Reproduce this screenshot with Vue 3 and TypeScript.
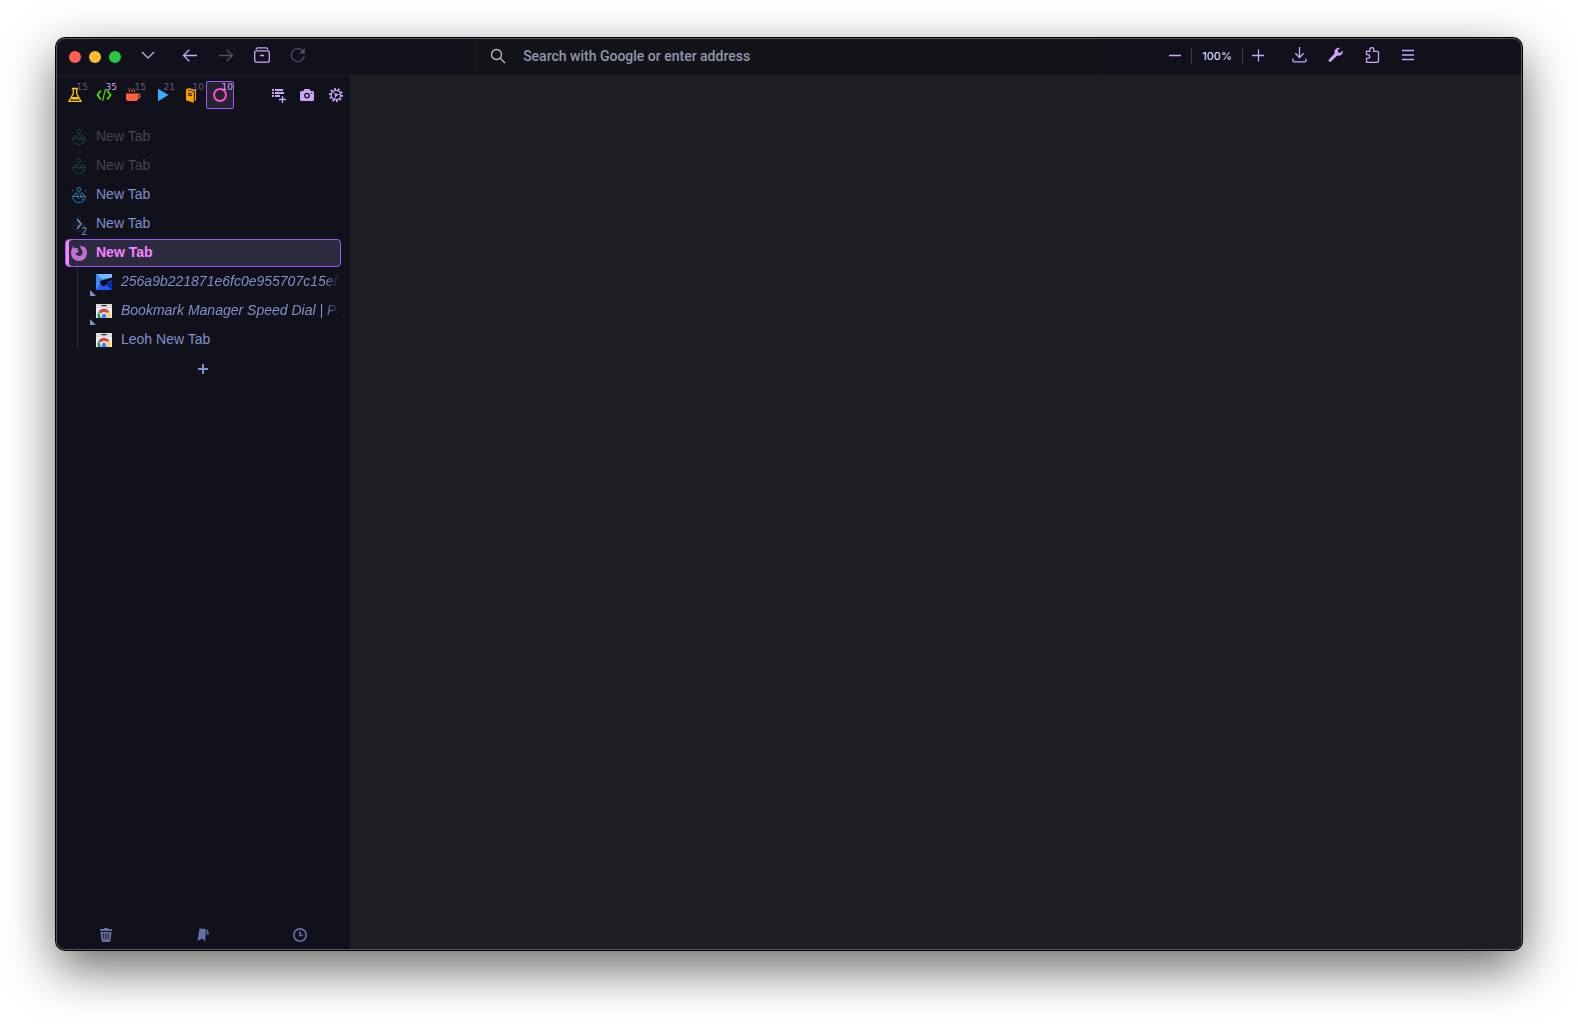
<script setup lang="ts">
import { ref } from 'vue'

interface Panel {
  id: string
  label: string
  count: number
}

interface Tab {
  id: number
  title: string
  icon: 'trio' | 'folded' | 'firefox' | 'blue' | 'store'
  state?: 'unloaded' | 'active'
  child?: boolean
  unread?: boolean
}

const panels: Panel[] = [
  { id: 'lab', label: 'Lab', count: 15 },
  { id: 'code', label: 'Code', count: 35 },
  { id: 'coffee', label: 'Coffee', count: 15 },
  { id: 'media', label: 'Media', count: 21 },
  { id: 'books', label: 'Books', count: 10 },
  { id: 'misc', label: 'Misc', count: 10 },
]

const activePanel = ref('misc')

const tabs: Tab[] = [
  { id: 1, title: 'New Tab', icon: 'trio', state: 'unloaded' },
  { id: 2, title: 'New Tab', icon: 'trio', state: 'unloaded' },
  { id: 3, title: 'New Tab', icon: 'trio' },
  { id: 4, title: 'New Tab', icon: 'folded' },
  { id: 5, title: 'New Tab', icon: 'firefox', state: 'active' },
  { id: 6, title: '256a9b221871e6fc0e955707c15ef', icon: 'blue', child: true, unread: true },
  { id: 7, title: 'Bookmark Manager Speed Dial | Pa', icon: 'store', child: true, unread: true },
  { id: 8, title: 'Leoh New Tab', icon: 'store', child: true },
]
</script>

<template>
  <div class="desktop">
    <div class="window">
      <header class="toolbar">
        <div class="lights">
          <button class="light close" aria-label="Close"></button>
          <button class="light minimize" aria-label="Minimize"></button>
          <button class="light maximize" aria-label="Zoom window"></button>
        </div>
        <button class="tool" aria-label="List tabs">
          <svg width="16" height="16" viewBox="0 0 16 16"><path d="M2 5l6 6 6-6" /></svg>
        </button>
        <nav class="history">
          <button class="tool" aria-label="Back">
            <svg width="16" height="16" viewBox="0 0 16 16"><path d="M15 8.500H1.500M7.300 2.700L1.500 8.500l5.800 5.800" /></svg>
          </button>
          <button class="tool dim" aria-label="Forward">
            <svg width="16" height="16" viewBox="0 0 16 16"><path d="M1 8.500h13.500M8.700 2.700L14.500 8.500l-5.800 5.800" /></svg>
          </button>
          <button class="tool" aria-label="Archive">
            <svg width="16" height="16" viewBox="0 0 16 16"><path d="M3 .8h10M2.300 3.800h11.400a1.600 1.600 0 0 1 1.600 1.600v8a1.800 1.800 0 0 1-1.800 1.800h-11a1.800 1.800 0 0 1-1.800-1.800v-8a1.600 1.600 0 0 1 1.600-1.600zM2 2.300L3 .8M14 2.300L13 .8M6 8.500h4" /></svg>
          </button>
          <button class="tool dim" aria-label="Reload">
            <svg width="16" height="16" viewBox="0 0 16 16"><path d="M14.300 9.200A6.500 6.500 0 1 1 12.400 3.500" /><path class="solid" d="M14.800.8v5.700H9z" /></svg>
          </button>
        </nav>
        <div class="spacer"></div>
        <label class="urlbar">
          <svg width="16" height="16" viewBox="0 0 16 16"><circle cx="6.500" cy="6.500" r="5" /><path d="M10.200 10.200L15 15" /></svg>
          <input type="text" placeholder="Search with Google or enter address" aria-label="Address" />
        </label>
        <div class="gap"></div>
        <div class="zoom">
          <button class="tool" aria-label="Zoom out">
            <svg width="16" height="16" viewBox="0 0 16 16"><path d="M2 8.500h12" /></svg>
          </button>
          <button class="level">100%</button>
          <button class="tool plus" aria-label="Zoom in">
            <svg width="16" height="16" viewBox="0 0 16 16"><path d="M2 8.500h12M8.500 2.500v12" /></svg>
          </button>
        </div>
        <div class="actions">
          <button class="tool" aria-label="Downloads">
            <svg width="16" height="16" viewBox="0 0 16 16"><path d="M7.500 0v10.500M3.300 6.300l4.200 4.200 4.200-4.200M1 11.500v2a1.300 1.300 0 0 0 1.300 1.300h10.400a1.300 1.300 0 0 0 1.300-1.300v-2" /></svg>
          </button>
          <button class="tool" aria-label="Developer tools">
            <svg width="16" height="16" viewBox="0 0 16 16"><path class="solid" d="M14.700 3.600l-2.600 2.300-2-.6-.4-2L12 .9C10.300.5 8.400 1 7.300 2.500c-.9 1.200-1 2.500-.6 3.700L1 12.600c-.7.7-.6 1.500 0 2s1.400.5 2 0l6.300-6c1.500.5 3.100.2 4.300-1 1.100-1.100 1.500-2.600 1.100-4z" /></svg>
          </button>
          <button class="tool" aria-label="Extensions">
            <svg width="16" height="16" viewBox="0 0 16 16"><path d="M2.500 15.300V11.300h1.300c2.600 0 2.600-3.600 0-3.600H2.500V4.400h3.300V2.600a2 2 0 0 1 4 0v1.800h3.700a1 1 0 0 1 1 1V14.300a1 1 0 0 1-1 1z" /></svg>
          </button>
          <button class="tool" aria-label="Menu">
            <svg width="16" height="16" viewBox="0 0 16 16"><path d="M2 3.500h12M2 8h12M2 12.500h12" /></svg>
          </button>
        </div>
      </header>

      <div class="body">
        <aside class="sidebar">
          <div class="panels">
            <button
              v-for="panel in panels"
              :key="panel.id"
              class="panel"
              :class="[panel.id, { current: panel.id === activePanel }]"
              :aria-label="panel.label"
              @click="activePanel = panel.id"
            >
              <svg v-if="panel.id === 'lab'" width="16" height="16" viewBox="0 0 16 16">
                <path class="line" d="M5 1.500h6M6.300 1.500v5L2 14.300h12L9.700 6.500v-5" />
                <path class="solid" d="M4.800 10h6.400l.8 2.500H4z" />
              </svg>
              <svg v-else-if="panel.id === 'code'" width="16" height="16" viewBox="0 0 16 16">
                <path class="line thick" d="M4.800 3.500L1.500 8l3.300 4.500M11.200 3.500L14.500 8l-3.300 4.500" />
                <path class="line" d="M9.500 2l-3 12" />
              </svg>
              <svg v-else-if="panel.id === 'coffee'" width="16" height="16" viewBox="0 0 16 16">
                <path class="solid" d="M1 6.500h12v5.300a2.200 2.200 0 0 1-2.200 2.200H3.200A2.200 2.200 0 0 1 1 11.800z" />
                <path class="line" d="M12.500 7.200h1a1.300 1.300 0 0 1 1.300 1.300v.6a2 2 0 0 1-2 2h-.3" />
                <path class="line steam" d="M4.700 5V3.600l-1-1V1.500M7.200 5V3.600l-1-1V1.500M9.700 5V3.600l-1-1V1.500" />
              </svg>
              <svg v-else-if="panel.id === 'media'" width="16" height="16" viewBox="0 0 16 16">
                <path class="solid" d="M4 1.800L14.500 8 4 14.200z" />
              </svg>
              <svg v-else-if="panel.id === 'books'" width="16" height="16" viewBox="0 0 16 16">
                <path class="solid" d="M3 2.300L5.500 1 13 3v10.500l-1.200.7V4.500L5 2.600l-.8.4 6.600 2v10.700L3 13.200z" />
                <path class="cut" d="M5 6l4 1.100M5 7.800L9 8.900" />
              </svg>
              <svg v-else width="16" height="16" viewBox="0 0 16 16">
                <circle class="line ring" cx="8" cy="8" r="6" />
              </svg>
              <span class="count">{{ panel.count }}</span>
            </button>

            <div class="panel-tools">
              <button class="panel" aria-label="New panel">
                <svg width="16" height="16" viewBox="0 0 16 16">
                  <path class="solid" d="M2 2h2v2H2zM5 2h8v2H5zM2 5h2v2H2zM5 5h9v2H5zM2 8h2v2H2zM5 8h5v2H5z" />
                  <path class="line" d="M9 12.500h7M12.500 9v7" />
                </svg>
              </button>
              <button class="panel" aria-label="Snapshot">
                <svg width="16" height="16" viewBox="0 0 16 16">
                  <path class="solid" fill-rule="evenodd" d="M5.500 2h5l1 2h2A1.500 1.500 0 0 1 15 5.500v7a1.500 1.500 0 0 1-1.500 1.500h-11A1.500 1.500 0 0 1 1 12.500v-7A1.500 1.500 0 0 1 2.500 4h2zM8 5.700a2.900 2.900 0 1 0 0 5.800 2.900 2.900 0 0 0 0-5.800zM12 5.800v1h1.200v-1z" />
                  <circle class="solid" cx="8" cy="8.600" r="1.600" />
                </svg>
              </button>
              <button class="panel" aria-label="Settings">
                <svg width="16" height="16" viewBox="0 0 16 16">
                  <circle class="line" cx="8" cy="8" r="4.700" />
                  <circle class="line teeth" cx="8" cy="8" r="6" pathLength="20" />
                  <circle class="solid" cx="8" cy="8" r="1.400" />
                  <path class="line spokes" d="M8 8l4.600-.8M8 8l-1.600 4.500M8 8L5 4.500" />
                </svg>
              </button>
            </div>
          </div>

          <ul class="tabs">
            <li v-for="tab in tabs" :key="tab.id" class="row" :class="{ child: tab.child }">
              <button class="tab" :class="[tab.state, { unread: tab.unread }]">
                <span class="favicon">
                  <svg v-if="tab.icon === 'trio' || tab.icon === 'folded'" class="trio" :class="{ faded: tab.icon === 'folded' }" width="16" height="16" viewBox="0 0 16 16">
                    <circle cx="8" cy="2.500" r="1.900" />
                    <path d="M4.800 5.800L7.300 9.500H2zM11.200 5.800L14 9.500H8.700zM1.300 9.500H2C1 12.500 4 15.400 8 15.400s7-2.900 6-5.900h.7M6 9.500L8.500 12M10 9.500l2.500 4M7 5.500L8 6.500l1-1M.8 3l1.400 1.200M15.200 3l-1.400 1.200" />
                  </svg>
                  <svg v-else-if="tab.icon === 'firefox'" width="16" height="16" viewBox="0 0 16 16">
                    <path fill="#c070cf" d="M2.800 1C1 2.800 0 5.300 0 8a8 8 0 0 0 16 0c0-2.900-1.400-5.500-3.600-7L12 2.200 9.800 0C9 1.500 9.300 3 10.300 4.200c1.300 1.500 1.700 3 1 4.600-.6 1.300-1.800 2.100-3.300 2.100-2 0-3.500-1.400-3.400-3.100.9.400 1.800.2 2.300-.4.500-.4 1.300-.6 1.200-1.200-.2-.6-1.600-.5-1.700-1.200-.1-.5.500-.8.600-1.600C5.800 3 4.600 3 3.800 3.600 3.200 3 2.800 2.200 2.800 1z" />
                  </svg>
                  <svg v-else-if="tab.icon === 'blue'" width="16" height="16" viewBox="0 0 16 16">
                    <path fill="#3f86ff" d="M0 0h16v16H0z" />
                    <path fill="#7ab8ff" d="M1 0h15v4L6 5z" />
                    <path fill="#1c5bff" d="M0 16l4-5.500 4 2.500 8-4v7z" />
                    <path fill="#0a2bb0" d="M11 12V8.500L16 6v10z" />
                    <path fill="#080d18" d="M16 3.500V6l-4.500 2L11 10l-3 3-3.500-2.500L4 7z" />
                  </svg>
                  <svg v-else width="16" height="16" viewBox="0 0 16 16">
                    <path fill="#eeeeee" d="M0 1h16v14H0z" />
                    <path fill="#dcdcde" d="M0 1h16v4H0z" />
                    <path fill="#202124" d="M5.500 2h5v1.200h-5z" />
                    <path fill="#db4437" d="M2.600 8.800a6.300 6.300 0 0 1 10.800 0L11 11a3.500 3.500 0 0 0-6 0z" />
                    <path fill="#0f9d58" d="M2.600 8.800L5.500 15H2a6.300 6.300 0 0 1 .6-6.200z" />
                    <path fill="#ffcd40" d="M10.500 9.500h3.200A6.300 6.300 0 0 1 14 15h-3.500z" />
                    <path fill="#ffffff" d="M4.700 15V12.500a3.300 3.300 0 0 1 6.600 0V15z" />
                    <path fill="#4285f4" d="M5.600 15V12.800a2.400 2.400 0 0 1 4.800 0V15z" />
                  </svg>
                  <template v-if="tab.icon === 'folded'">
                    <svg class="expander" width="8" height="12" viewBox="0 0 8 12"><path d="M2 1l4 5-4 5" /></svg>
                    <span class="nested">2</span>
                  </template>
                </span>
                <span class="title">{{ tab.title }}</span>
              </button>
            </li>
          </ul>
          <button class="new-tab" aria-label="New tab">
            <svg width="12" height="12" viewBox="0 0 12 12"><path d="M1 6h10M6 1v10" /></svg>
          </button>

          <footer class="bottom">
            <button aria-label="Recently closed">
              <svg width="16" height="16" viewBox="0 0 16 16"><path fill-rule="evenodd" d="M6 1h4v1h4v2H2V2h4zM2.500 5h11l-1 8.500A1.500 1.500 0 0 1 11 15H5a1.500 1.500 0 0 1-1.500-1.500zM5 6.500l.5 6h.7V6.500zM7.500 6.500v6h1v-6zM9.800 6.500v6h.7l.5-6z" /></svg>
            </button>
            <button aria-label="Bookmarks">
              <svg width="16" height="16" viewBox="0 0 16 16"><path d="M4.500 1.500L11 2l-.8 12.500-2.800-3L2.500 14zM11.800 2c1.300.8 2 3 2 6l-1.500-.5-.8 1z" /></svg>
            </button>
            <button aria-label="History">
              <svg class="clock" width="16" height="16" viewBox="0 0 16 16"><circle cx="8" cy="8" r="6.200" /><path d="M8 4.500V8.500h3" /></svg>
            </button>
          </footer>
        </aside>
        <main class="page"></main>
      </div>
    </div>
  </div>
</template>

<style>
body {
  margin: 0;
  background: #fff;
}
</style>

<style scoped>
.desktop {
  display: flex;
  box-sizing: border-box;
  min-height: 100vh;
  padding: 38px 56px 74px;
  overflow: hidden;
}

.window {
  display: flex;
  flex: 1;
  flex-direction: column;
  min-width: 0;
  overflow: hidden;
  border: 1px solid #57575c;
  border-radius: 9px;
  background: #11111b;
  box-shadow: 0 0 0 1px #000, 0 18px 50px rgba(0, 0, 0, 0.6);
  font-family: "Liberation Sans", Arial, sans-serif;
}

button {
  display: flex;
  align-items: center;
  justify-content: center;
  padding: 0;
  border: 0;
  background: none;
  color: inherit;
  font: inherit;
}

svg {
  flex: none;
}

.toolbar {
  display: flex;
  align-items: center;
  height: 36px;
  padding: 0 95px 0 12px;
  border-bottom: 1px solid #1e1e2b;
  color: #cba6f7;
}

.lights {
  display: flex;
  gap: 8px;
  margin-right: 9px;
}

.light {
  width: 12px;
  height: 12px;
  border-radius: 50%;
}

.close {
  background: #ff5f57;
}

.minimize {
  background: #febc2e;
}

.maximize {
  background: #28c840;
}

.tool {
  box-sizing: border-box;
  width: 36px;
  height: 36px;
  padding-bottom: 4px;
}

.tool svg,
.urlbar svg {
  fill: none;
  stroke: currentColor;
  stroke-width: 1.3;
}

.tool .solid {
  fill: currentColor;
  stroke: none;
}

.dim {
  color: #574a6e;
}

.history {
  display: flex;
  margin-left: 6px;
}

.spacer {
  flex: 161 0 0;
}

.gap {
  flex: 59 0 0;
}

.urlbar {
  display: flex;
  flex: 622 0 0;
  align-items: center;
  gap: 17px;
  box-sizing: border-box;
  height: 36px;
  padding: 0 0 2px 16px;
  background: #131418;
  color: #b4b9d9;
}

.urlbar input {
  flex: 1;
  min-width: 0;
  padding: 0;
  border: 0;
  outline: 0;
  background: none;
  color: #cdd6f4;
  font: 500 14px/20px Roboto, sans-serif;
}

.urlbar input::placeholder {
  color: #9096b0;
  opacity: 1;
}

.zoom {
  display: flex;
  align-items: center;
  margin-right: 7px;
}

.zoom .tool {
  width: 32px;
}

.zoom .plus {
  padding-right: 3px;
}

.level {
  width: 52px;
  height: 16px;
  margin-bottom: 3px;
  border: solid #3b3b4c;
  border-width: 0 1px;
  color: #cdd6f4;
  font: 500 11px/16px Inter, sans-serif;
}

.actions {
  display: flex;
}

.body {
  display: flex;
  flex: 1;
}

.sidebar {
  display: flex;
  flex: none;
  flex-direction: column;
  width: 293px;
  border-right: 1px solid #1e1e2b;
}

.page {
  flex: 1;
  background: #1e1d22;
}

.panels {
  display: flex;
  gap: 1px;
  padding: 5px 0 14px 4px;
}

.panel {
  position: relative;
  box-sizing: border-box;
  width: 28px;
  height: 28px;
  border: 1px solid transparent;
  border-radius: 2px;
}

.panel .solid {
  fill: currentColor;
}

.panel .line {
  fill: none;
  stroke: currentColor;
  stroke-width: 1.3;
}

.panel .thick,
.panel .ring {
  stroke-width: 2;
}

.panel .teeth {
  stroke-width: 2;
  stroke-dasharray: 1 1;
}

.panel .spokes,
.panel .steam {
  stroke-width: 1;
}

.panel .cut {
  fill: none;
  stroke: #11111b;
}

.lab {
  color: #ffcb00;
}

.code {
  color: #51cd00;
}

.coffee {
  color: #ff613d;
}

.media {
  color: #37adff;
}

.books {
  color: #ff9f00;
}

.misc {
  color: #ff4bda;
}

.panel.current {
  border-color: #9d5cf5;
  background: #25242e;
}

.count {
  position: absolute;
  top: 0;
  right: 0;
  color: #65587f;
  font: 9px/10px "DejaVu Sans", sans-serif;
}

.code .count,
.current .count {
  color: #cba6f7;
}

.panel-tools {
  display: flex;
  gap: 1px;
  margin-left: auto;
  color: #cba6f7;
}

.tabs {
  display: flex;
  flex-direction: column;
  gap: 1px;
  margin: 0;
  padding: 0 9px 0 8px;
  list-style: none;
}

.row {
  position: relative;
}

.row.child {
  padding-left: 25px;
}

.row.child::before {
  position: absolute;
  top: -1px;
  bottom: 0;
  left: 12px;
  width: 1px;
  background: #2c2c3a;
  content: "";
}

.row:last-child::before {
  bottom: 6px;
}

.tab {
  position: relative;
  justify-content: flex-start;
  gap: 9px;
  box-sizing: border-box;
  width: 100%;
  height: 28px;
  padding: 0 2px 0 6px;
  border-radius: 4px;
  color: #8090c8;
  font-size: 14px;
  line-height: 20px;
  text-align: left;
}

.tab.unloaded {
  color: #44444f;
}

.tab.active {
  padding: 0 1px 0 5px;
  border: 1px solid #a259f7;
  background: #2c2a3e;
  box-shadow: inset 3px 0 #f783ff;
  color: #f783ff;
  font-weight: bold;
}

.title {
  flex: 1;
  min-width: 0;
  overflow: hidden;
  padding-bottom: 2px;
  white-space: nowrap;
}

.unread .title {
  font-style: italic;
  mask-image: linear-gradient(to left, transparent, #000 14px);
}

.unread::before {
  position: absolute;
  bottom: 0;
  left: 0;
  width: 6px;
  height: 6px;
  background: #8090c8;
  clip-path: polygon(0 0, 100% 100%, 0 100%);
  content: "";
}

.favicon {
  position: relative;
  flex: none;
  width: 16px;
  height: 16px;
  line-height: 0;
}

.trio {
  fill: none;
  stroke: #2b83b5;
}

.unloaded .trio {
  opacity: 0.4;
}

.trio.faded {
  opacity: 0.2;
}

.expander {
  position: absolute;
  top: 2px;
  left: 4px;
  fill: none;
  stroke: #8090c8;
  stroke-width: 1.3;
}

.nested {
  position: absolute;
  right: 0;
  bottom: -6px;
  font-size: 10px;
  line-height: 12px;
}

.new-tab {
  box-sizing: border-box;
  width: 100%;
  height: 29px;
  padding-right: 2px;
}

.new-tab svg {
  stroke: #8090c8;
  stroke-width: 2;
}

.bottom {
  display: grid;
  grid-template-columns: repeat(3, 1fr);
  height: 28px;
  margin-top: auto;
  padding-right: 1px;
}

.bottom svg {
  fill: #6470a0;
}

.bottom .clock {
  fill: none;
  stroke: #6470a0;
  stroke-width: 1.7;
}
</style>
